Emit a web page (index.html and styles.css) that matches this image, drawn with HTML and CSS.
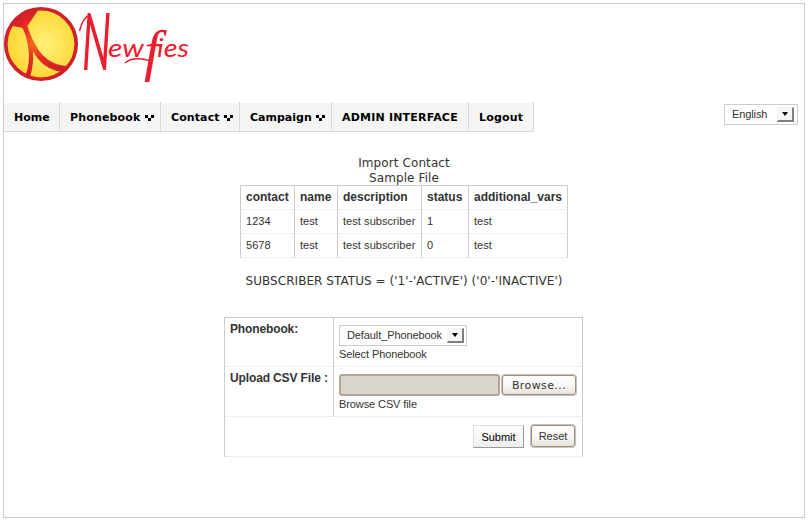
FILE: index.html
```html
<!DOCTYPE html>
<html lang="en">
<head>
<meta charset="utf-8">
<title>Newfies - Import Contact</title>
<link rel="stylesheet" href="styles.css">
</head>
<body>
<div class="page">
  <header class="brand">
    <svg class="logo" width="200" height="90" viewBox="0 0 200 90">
      <defs>
        <radialGradient id="ball" cx=".55" cy=".5" r=".55"><stop offset="0" stop-color="#fff17a"/><stop offset="1" stop-color="#ffd42f"/></radialGradient>
        <radialGradient id="band" gradientUnits="userSpaceOnUse" cx="34" cy="43" r="34"><stop offset="0" stop-color="#f26a21"/><stop offset=".5" stop-color="#e9281f"/><stop offset="1" stop-color="#d2202a"/></radialGradient>
        <clipPath id="disc"><circle cx="41" cy="44" r="35.5"/></clipPath>
      </defs>
      <circle cx="41" cy="44" r="35.2" fill="url(#ball)"/>
      <g clip-path="url(#disc)" fill="url(#band)">
        <path d="M5 26L12 26L24 28L28 25L39 9L38 4H10Z"/>
        <path d="M22 27L27 25Q31 37 35 44Q45 64 66 66L62 72Q42 69 33 51Q34 64 30 77L25 77Q31 62 28 46Q26 34 22 27Z"/>
      </g>
      <circle cx="41" cy="44" r="35.2" fill="none" stroke="#d2202a" stroke-width="3.6"/>
      <text class="wordmark" y="57"><tspan class="initial" x="82" y="70" textLength="29" lengthAdjust="spacingAndGlyphs">N</tspan><tspan x="108" y="57" textLength="36" lengthAdjust="spacingAndGlyphs">ew</tspan><tspan class="tall" x="144" y="70">f</tspan><tspan x="157" y="57" textLength="32" lengthAdjust="spacingAndGlyphs">ies</tspan></text>
      <path class="swash" d="M79.500 31Q83 17 90 15M125 63C131 58 141 58 151 61"/>
    </svg>
  </header>
  <div class="bar">
    <nav class="menu">
      <a class="home">Home</a>
      <a class="phonebook">Phonebook<i class="more"></i></a>
      <a class="contact">Contact<i class="more"></i></a>
      <a class="campaign">Campaign<i class="more"></i></a>
      <a class="admin">ADMIN INTERFACE</a>
      <a class="logout">Logout</a>
    </nav>
    <div class="select language"><span>English</span><i class="drop"></i></div>
  </div>
  <main>
    <div class="heading">Import Contact<br>Sample File</div>
    <table class="sample">
      <colgroup><col class="c1"><col class="c2"><col class="c3"><col class="c4"><col class="c5"></colgroup>
      <tr><th>contact</th><th>name</th><th>description</th><th>status</th><th>additional_vars</th></tr>
      <tr><td>1234</td><td>test</td><td>test subscriber</td><td>1</td><td>test</td></tr>
      <tr><td>5678</td><td>test</td><td>test subscriber</td><td>0</td><td>test</td></tr>
    </table>
    <div class="note">SUBSCRIBER STATUS = ('1'-'ACTIVE') ('0'-'INACTIVE')</div>
    <table class="import">
      <colgroup><col class="label"><col class="field"></colgroup>
      <tr class="book"><th>Phonebook:</th><td><div class="select"><span>Default_Phonebook</span><i class="drop"></i></div><div class="help">Select Phonebook</div></td></tr>
      <tr class="upload"><th>Upload CSV File :</th><td><div class="file"><span class="path"></span><button class="soft browse">Browse...</button></div><div class="help">Browse CSV file</div></td></tr>
      <tr class="actions"><td colspan="2"><div class="buttons"><button class="submit">Submit</button><button class="soft reset">Reset</button></div></td></tr>
    </table>
  </main>
</div>
</body>
</html>
```
FILE: styles.css
```css
* { box-sizing: border-box; }
body { margin: 0; padding: 3px; background: #fff; color: #333; font: 12px/15px "DejaVu Sans", sans-serif; }
.page { width: 802px; height: 515px; border: 1px solid #ccc; }
.brand { height: 102px; }
.logo { display: block; margin: -4px 0 0 -4px; overflow: visible; }
.wordmark { fill: #ed1c2e; font: italic 25px Lato, sans-serif; }
.initial { font-size: 80px; font-weight: 400; }
.tall { font: italic 58px "Liberation Serif", serif; }
.swash { fill: none; stroke: #ed1c2e; stroke-width: 1.5; }

.bar { display: flex; justify-content: space-between; height: 30px; }
.menu { display: flex; }
.menu a { display: flex; align-items: center; height: 30px; padding: 1px 0 0 10px; border-right: 1px solid #d8d8d8; border-bottom: 1px solid #d8d8d8; background: linear-gradient(#fff 1px, #f5f5f5 1px); color: #000; font: bold 11px "DejaVu Sans", sans-serif; white-space: nowrap; }
.menu .home { width: 56px; }
.menu .phonebook { width: 101px; letter-spacing: .15px; }
.menu .contact { width: 79px; letter-spacing: .1px; }
.menu .campaign { width: 92px; }
.menu .admin { width: 137px; letter-spacing: .2px; }
.menu .logout { width: 65px; letter-spacing: .2px; }
.more { width: 9px; height: 6px; margin: 2px 6px 0 auto; background: linear-gradient(#000, #000) 0 0 / 3px 3px no-repeat, linear-gradient(#000, #000) 6px 0 / 3px 3px no-repeat, linear-gradient(#000, #000) 3px 3px / 3px 3px no-repeat; }

.select { display: flex; align-items: center; justify-content: space-between; width: 128px; height: 21px; padding: 0 2px 0 7px; border: 1px solid #ccc; background: #fff; font: 11px "Liberation Sans", sans-serif; letter-spacing: -.1px; }
.select span { margin-top: -2px; }
.language { width: 74px; margin: 2px 6px 0 0; padding-right: 3px; }
.drop { position: relative; width: 17px; height: 15px; border: 1px solid #f4f4f4; border-right: 2px solid #808080; border-bottom: 2px solid #808080; background: #f5f5f3; }
.drop::after { content: ""; position: absolute; left: 4px; top: 4px; border: 3.5px solid transparent; border-top: 4px solid #000; border-bottom: 0; }

.heading { margin-top: 24px; text-align: center; letter-spacing: .1px; }
table { border: solid #ccc; border-width: 1px 0 0 1px; border-spacing: 0; table-layout: fixed; font: 11px/13px "Liberation Sans", sans-serif; }
th, td { padding: 5px; border-right: 1px solid #ccc; border-bottom: 1px solid #eee; text-align: left; vertical-align: top; white-space: nowrap; }
th { font-size: 12px; }
.sample { width: 328px; margin: -1px auto 0; }
.sample tr { height: 24px; }
.sample td { letter-spacing: .06px; }
.c1 { width: 54px; }
.c2 { width: 43px; }
.c3 { width: 84px; }
.c4 { width: 47px; }
.c5 { width: 99px; }
.note { margin-top: 16px; text-align: center; letter-spacing: .05px; }

.import { width: 359px; margin: 28px 0 0 220px; }
.label { width: 109px; }
.field { width: 249px; }
.book { height: 49px; }
.upload { height: 50px; }
.actions { height: 40px; }
.import th { letter-spacing: -.13px; }
.import td { padding-top: 7px; padding-bottom: 0; }
.help { margin-top: 2px; letter-spacing: -.1px; }
.file { display: flex; gap: 2px; }
.path { width: 161px; height: 22px; border: 2px solid #b0a698; border-radius: 3px; background: #d9d4cc; }
button { padding: 0; color: #333; font: 11px "Liberation Sans", sans-serif; }
.soft { border: 1px solid #9c9080; border-radius: 3px; background: linear-gradient(#fff, #f8f7f5 50%, #e6e3de); box-shadow: 0 0 0 1px #c9c2b8; }
.browse { width: 74px; height: 20px; margin: 1px 0; font-family: "DejaVu Sans", sans-serif; letter-spacing: .4px; }
.buttons { display: flex; justify-content: flex-end; padding-top: 1px; }
.submit { width: 51px; height: 23px; border: 1px solid #ddd; border-right-color: #999; border-bottom-color: #999; background: linear-gradient(#fff, #eee); color: #000; }
.reset { width: 44px; height: 22px; margin: 0 2px 0 7px; }
```
